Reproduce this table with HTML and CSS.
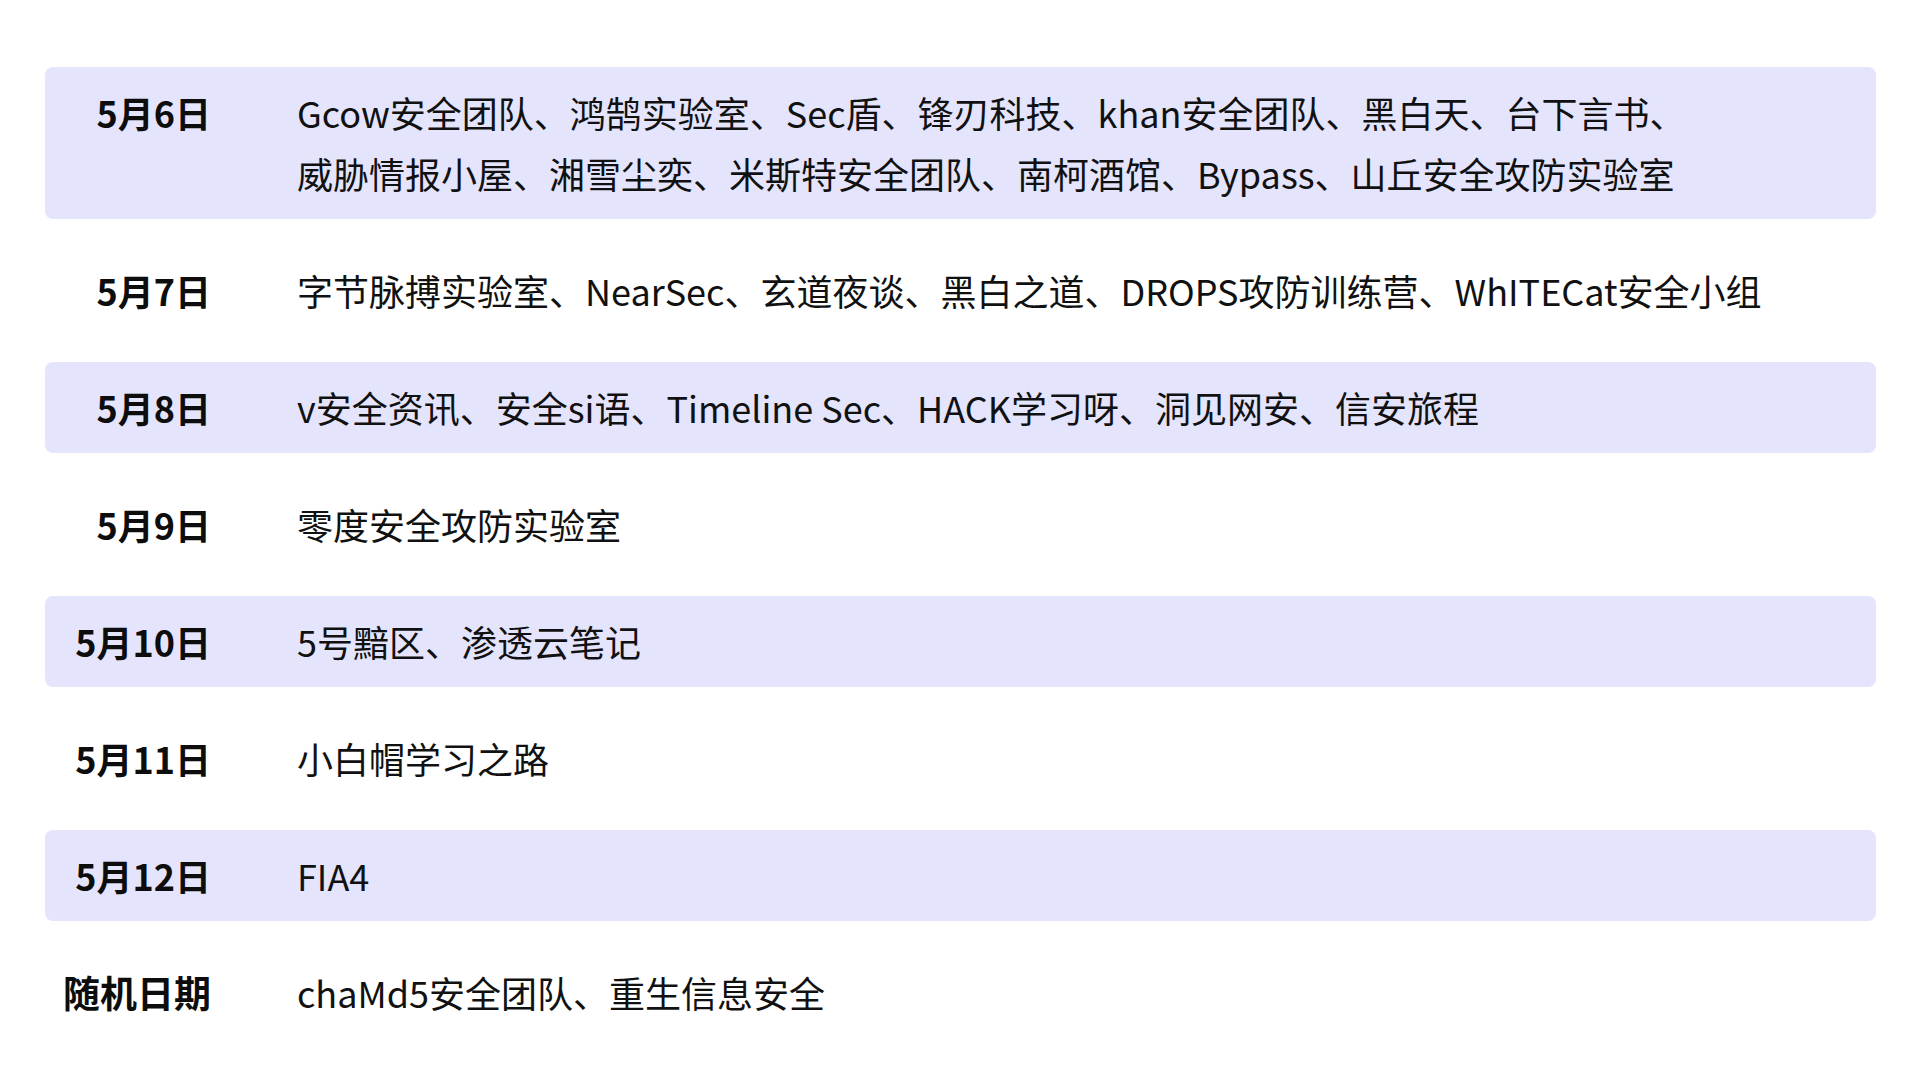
FILE: index.html
```html
<!DOCTYPE html>
<html lang="zh-CN">
<head>
<meta charset="utf-8">
<title>日程</title>
<link rel="stylesheet" href="styles.css">
</head>
<body>
<div class="schedule">
  <div class="row shaded">
    <div class="date">5月6日</div>
    <div class="names">Gcow安全团队、鸿鹄实验室、Sec盾、锋刃科技、khan安全团队、黑白天、台下言书、<br>威胁情报小屋、湘雪尘奕、米斯特安全团队、南柯酒馆、Bypass、山丘安全攻防实验室</div>
  </div>
  <div class="row">
    <div class="date">5月7日</div>
    <div class="names">字节脉搏实验室、NearSec、玄道夜谈、黑白之道、DROPS攻防训练营、WhITECat安全小组</div>
  </div>
  <div class="row shaded">
    <div class="date">5月8日</div>
    <div class="names">v安全资讯、安全si语、Timeline Sec、HACK学习呀、洞见网安、信安旅程</div>
  </div>
  <div class="row">
    <div class="date">5月9日</div>
    <div class="names">零度安全攻防实验室</div>
  </div>
  <div class="row shaded">
    <div class="date">5月10日</div>
    <div class="names">5号黯区、渗透云笔记</div>
  </div>
  <div class="row">
    <div class="date">5月11日</div>
    <div class="names">小白帽学习之路</div>
  </div>
  <div class="row shaded">
    <div class="date">5月12日</div>
    <div class="names">FIA4</div>
  </div>
  <div class="row">
    <div class="date date-wide">随机日期</div>
    <div class="names">chaMd5安全团队、重生信息安全</div>
  </div>
</div>
</body>
</html>
```
FILE: styles.css
```css
html, body {
  margin: 0;
  padding: 0;
  background: #ffffff;
}

body {
  font-family: "Noto Sans CJK SC", "Noto Sans", sans-serif;
  color: #111111;
}

.schedule {
  display: flex;
  flex-direction: column;
  gap: 26px;
  padding: 67px 44px 0 45px;
}

.row {
  display: grid;
  grid-template-columns: 166px 1fr;
  column-gap: 86px;
  padding: 15px 0;
  border-radius: 8px;
  font-size: 36px;
  line-height: 61px;
}

.row.shaded {
  background: #e4e4fd;
}

.date {
  text-align: right;
  font-weight: 700;
  color: #0d0d0d;
}

.date-wide {
  font-size: 37px;
}

.names {
  font-weight: 400;
  white-space: nowrap;
}
```
